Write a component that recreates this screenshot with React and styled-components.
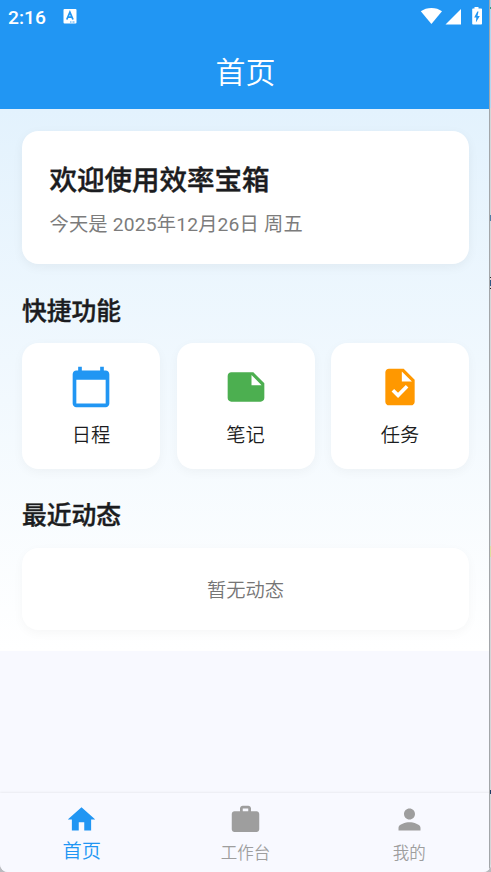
import React from "react";
import styled, { createGlobalStyle } from "styled-components";
import {
  MdCalendarToday,
  MdHome,
  MdNote,
  MdPerson,
  MdTask,
  MdWork,
} from "react-icons/md";

const GlobalStyle = createGlobalStyle`
  * {
    box-sizing: border-box;
  }

  body {
    margin: 0;
    background: #b9bbbf;
    font-family: Roboto, "Noto Sans CJK SC", sans-serif;
    color: #1b1c20;
  }
`;

const Screen = styled.div`
  position: relative;
  display: flex;
  flex-direction: column;
  width: 491px;
  height: 872px;
  overflow: hidden;
  border-radius: 0 0 8px 8px;
  background: #f8f9ff;
`;

// 視窗右側邊緣，蓋在內容上，最外一像素露出後面的視窗
const WindowEdge = styled.div`
  position: absolute;
  top: 0;
  right: 0;
  width: 2px;
  height: 100%;
  border-left: 1px solid #a3a6a9;
  background: linear-gradient(
    #b5cfe2 0 7px,
    #2f9c86 7px 9px,
    #b5d8f0 9px 108px,
    #d4d6d8 108px 215px,
    #4d7ea6 215px 221px,
    #d4d6d8 221px 277px,
    #25282c 277px 278px,
    #d4d6d8 278px 280px,
    #2f5c86 280px 286px,
    #d4d6d8 286px 288px,
    #25282c 288px 289px,
    #d4d6d8 289px 546px,
    #dcdf9c 546px 557px,
    #d4d6d8 557px 790px,
    #1d3f66 790px 794px,
    #d4d6d8 794px
  );
`;

const Header = styled.header`
  display: flex;
  flex-direction: column;
  height: 109px;
  background: #2196f3;
  color: #fff;
`;

const StatusBar = styled.div`
  display: flex;
  align-items: center;
  height: 33px;
  padding: 0 8px;
`;

const Time = styled.span`
  width: 55px;
  font-size: 19.25px;
  font-weight: 500;
  line-height: 33px;
  padding-top: 1px;
`;

const StatusIcons = styled.div`
  display: flex;
  align-items: center;
  margin-left: auto;
`;

const PageTitle = styled.h1`
  margin: 0;
  padding-top: 2px;
  font-size: 30px;
  font-weight: 350;
  line-height: 76px;
  text-align: center;
`;

const Content = styled.main`
  display: flex;
  flex-direction: column;
  height: 542px;
  padding: 22px;
  background: linear-gradient(#e3f2fd, #fff);
`;

const Card = styled.section`
  border-radius: 16.5px;
  background: #fff;
  box-shadow: 0 3px 11px rgba(0, 0, 0, ${({ $shadow }) => $shadow || 0.05});
`;

const WelcomeCard = styled(Card)`
  height: 133px;
  padding: 28.5px 27.5px;
`;

const WelcomeTitle = styled.h2`
  margin: 0;
  font-size: 27.5px;
  font-weight: 500;
  line-height: 42px;
  -webkit-text-stroke: 0.4px currentColor;
`;

const DateText = styled.p`
  margin: 9px 0 0;
  font-size: 19.25px;
  font-weight: 400;
  line-height: 28px;
  letter-spacing: 0.18px;
  color: #7c7c7c;
`;

const SectionTitle = styled.h3`
  margin: ${({ $top }) => $top}px 0 ${({ $bottom }) => $bottom}px;
  font-size: 24.75px;
  font-weight: 500;
  line-height: 36px;
  -webkit-text-stroke: 0.4px currentColor;
`;

const Tiles = styled.div`
  display: grid;
  grid-template-columns: repeat(3, 1fr);
  gap: 16.5px;
`;

const Tile = styled(Card)`
  display: flex;
  flex-direction: column;
  align-items: center;
  gap: 13px;
  height: 125.5px;
  padding-top: 22px;
  font-size: 19.25px;
  font-weight: 350;
  line-height: 28px;

  svg {
    width: 44px;
    height: 44px;
    color: ${({ $color }) => $color};
  }
`;

const EmptyCard = styled(Card)`
  height: 82px;
  font-size: 19.25px;
  font-weight: 350;
  line-height: 85px;
  text-align: center;
  color: #757575;
`;

const TabBar = styled.nav`
  display: grid;
  grid-template-columns: repeat(3, 1fr);
  height: 79px;
  margin-top: auto;
  background: #f8f9ff;
  box-shadow: 0 -1px 2px rgba(0, 0, 0, 0.06);
`;

const Tab = styled.div`
  display: flex;
  flex-direction: column;
  align-items: center;
  padding-top: 9.6px;
  font-size: ${({ $active }) => ($active ? 19.25 : 16.5)}px;
  font-weight: 350;
  line-height: ${({ $active }) => ($active ? 31 : 35)}px;
  color: ${({ $active }) => ($active ? "#2196f3" : "#9e9e9e")};

  svg {
    flex: none;
    width: 33px;
    height: 33px;
  }
`;

const KeyboardIcon = () => (
  <svg width="14" height="15" viewBox="0 0 14 15">
    <rect x="0.5" width="13" height="14.5" rx="1" fill="#fff" />
    <path
      d="M3.8 10.5 6.9 3.2 10 10.5M4.9 8.2h4"
      fill="none"
      stroke="#2196f3"
      strokeWidth="1.8"
    />
    <path d="M7 13h5" stroke="#2196f3" strokeWidth="0.9" strokeDasharray="1 0.5" />
  </svg>
);

// 訊號與電量
const SignalIcons = () => (
  <svg width="63" height="19" viewBox="0 0 63 19">
    <path d="M.8 4.300C6.500-.2 16.500-.2 22 4.300L11.400 17Z" fill="#fff" />
    <path d="M41 2v15.500h-15.500Z" fill="#fff" />
    <path
      d="M54.500 0h4v1.500h2.700a.8.8 0 0 1 .8.8V16.700a.8.8 0 0 1-.8.8h-8.200a.8.8 0 0 1-.8-.8V2.300a.8.8 0 0 1 .8-.8h1.500Z"
      fill="#fff"
    />
    <path d="M57.300 4.500 54.200 10.500h2.100l-.4 5L59.800 9h-2.300L58.500 4.500Z" fill="#2196f3" />
  </svg>
);

const shortcuts = [
  { label: "日程", icon: MdCalendarToday, color: "#2196f3" },
  { label: "笔记", icon: MdNote, color: "#4caf50" },
  { label: "任务", icon: MdTask, color: "#ff9800" },
];

const tabs = [
  { label: "首页", icon: MdHome, active: true },
  { label: "工作台", icon: MdWork },
  { label: "我的", icon: MdPerson },
];

const App = () => {
  return (
    <>
      <GlobalStyle />
      <Screen>
        <Header>
          <StatusBar>
            <Time>2:16</Time>
            <KeyboardIcon />
            <StatusIcons>
              <SignalIcons />
            </StatusIcons>
          </StatusBar>
          <PageTitle>首页</PageTitle>
        </Header>
        <Content>
          <WelcomeCard>
            <WelcomeTitle>欢迎使用效率宝箱</WelcomeTitle>
            <DateText>今天是 2025年12月26日 周五</DateText>
          </WelcomeCard>
          <SectionTitle $top={29.6} $bottom={13.8}>
            快捷功能
          </SectionTitle>
          <Tiles>
            {shortcuts.map(({ label, icon: Icon, color }) => (
              <Tile key={label} $color={color} $shadow={0.04}>
                <Icon />
                <span>{label}</span>
              </Tile>
            ))}
          </Tiles>
          <SectionTitle $top={29} $bottom={13.8}>
            最近动态
          </SectionTitle>
          <EmptyCard $shadow={0.035}>暂无动态</EmptyCard>
        </Content>
        <TabBar>
          {tabs.map(({ label, icon: Icon, active }) => (
            <Tab key={label} $active={active}>
              <Icon />
              <span>{label}</span>
            </Tab>
          ))}
        </TabBar>
        <WindowEdge />
      </Screen>
    </>
  );
};

export default App;
